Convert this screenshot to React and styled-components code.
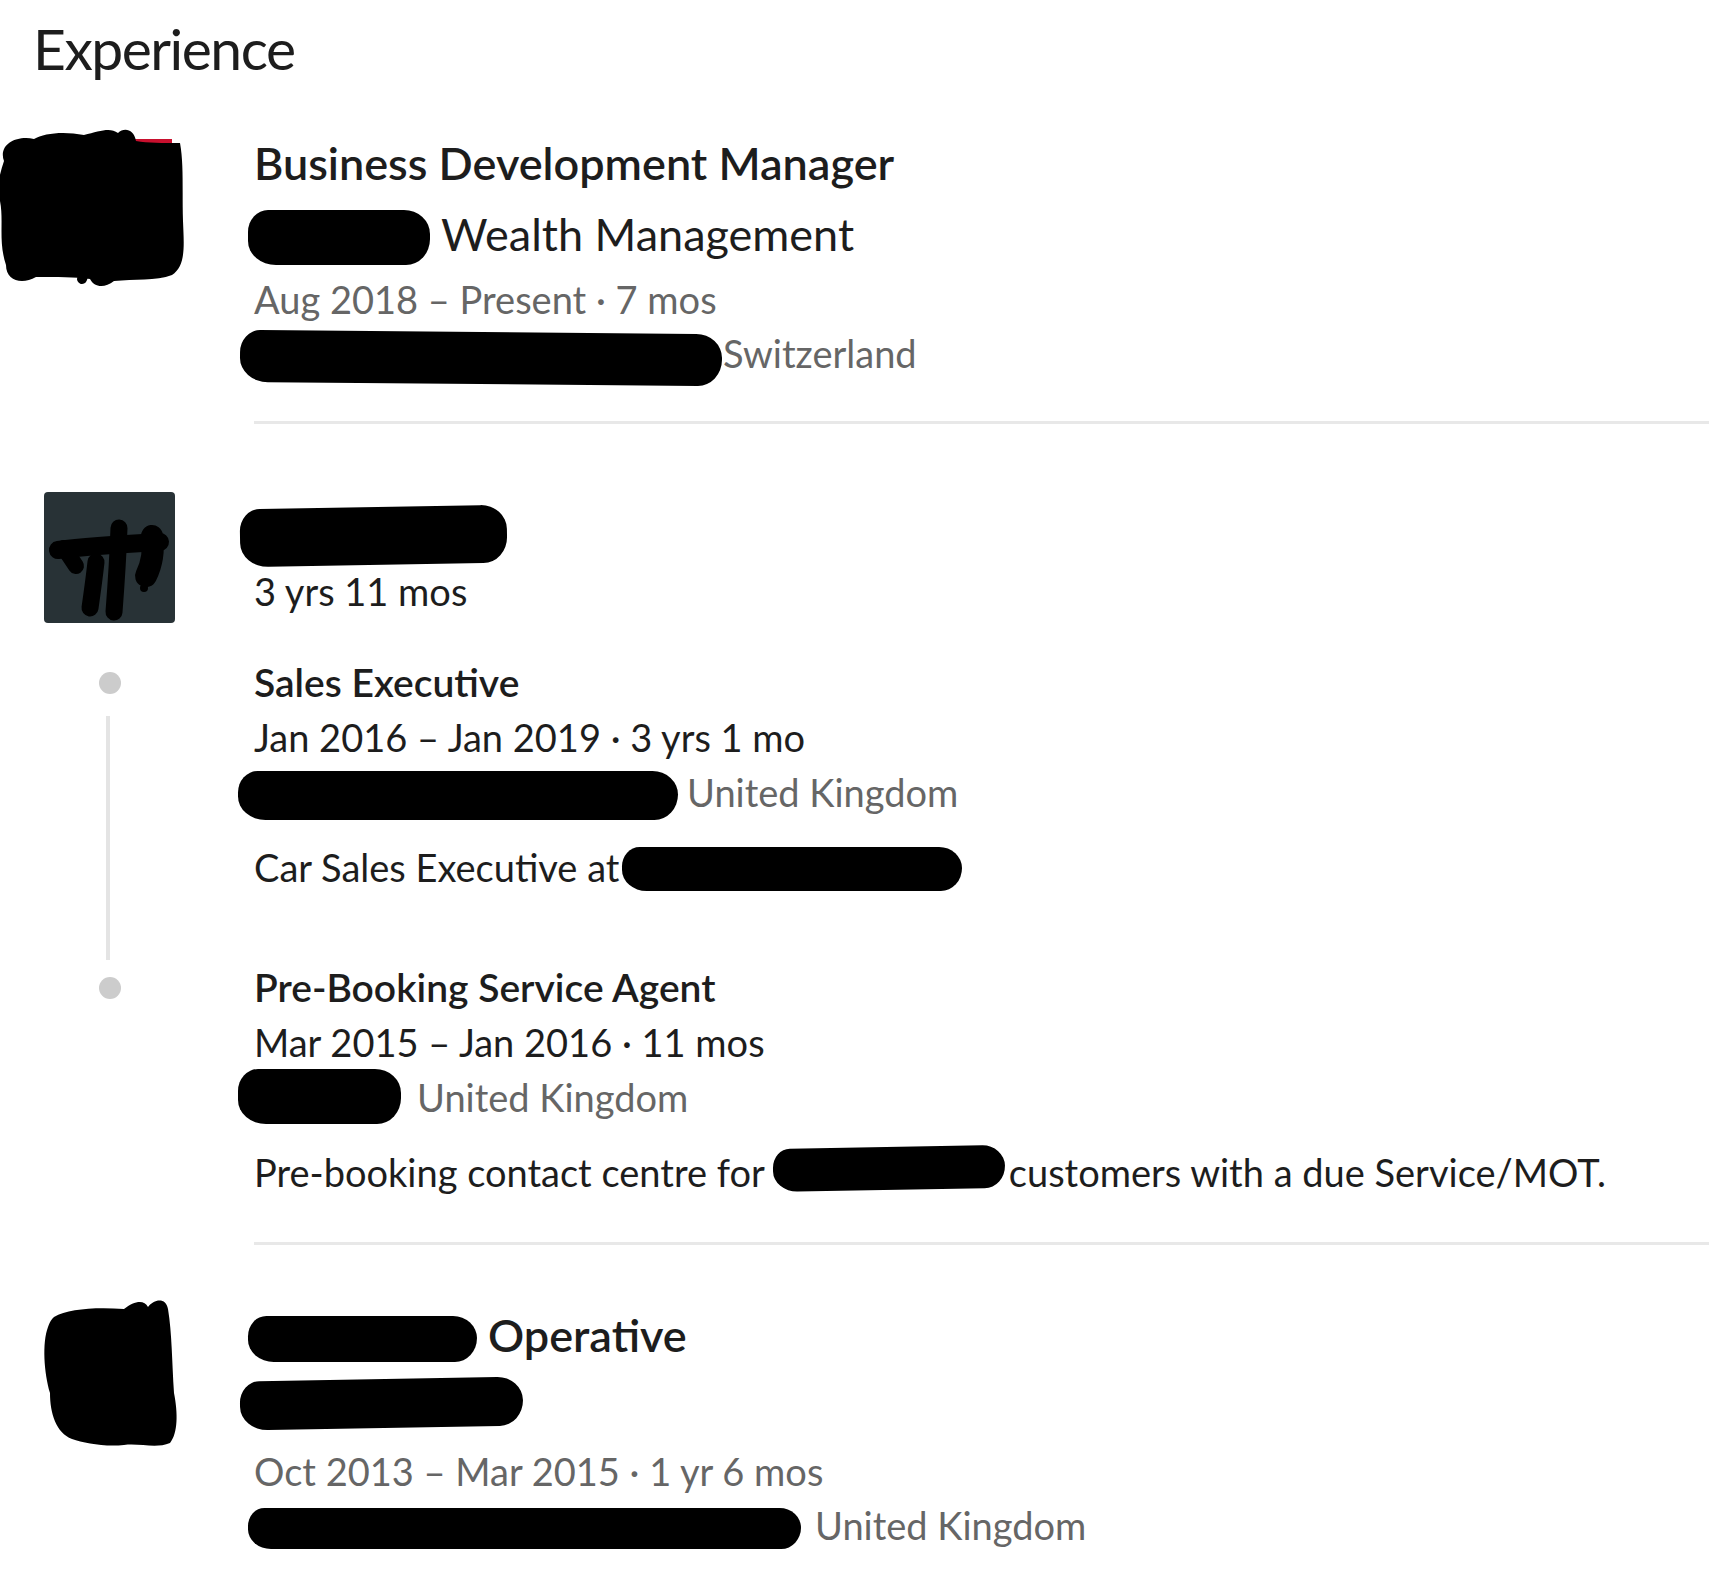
import React from "react";
import styled, { createGlobalStyle } from "styled-components";

const GlobalStyle = createGlobalStyle`
  html, body {
    margin: 0;
    padding: 0;
    background: #ffffff;
  }
  body {
    font-family: "Lato", "Open Sans", "Liberation Sans", sans-serif;
    color: #1d1d1d;
  }
`;

const Colors = {
  Text: "#1d1d1d",
  Gray: "#666666",
  Divider: "#e8e8e8",
  Dot: "#cccccc",
  Line: "#e4e4e4",
};

const Page = styled.div`
  width: 1709px;
  padding-top: 8px;
`;

const Heading = styled.h2`
  margin: 0 0 43px 33px;
  font-size: 57px;
  line-height: 80px;
  letter-spacing: -1.5px;
  font-weight: 400;
  color: ${Colors.Text};
`;

const Entry = styled.section`
  display: grid;
  grid-template-columns: 131px 1fr;
  column-gap: 79px;
  padding-left: 44px;
  padding-top: ${(p) => p.$top || 0}px;
`;

const Logo = styled.div`
  width: 131px;
  height: 131px;
  grid-column: 1;
  svg {
    display: block;
    overflow: visible;
  }
`;

const Body = styled.div`
  grid-column: 2;
  display: flex;
  flex-direction: column;
  padding-bottom: ${(p) => p.$bottom || 0}px;
`;

const Title = styled.div`
  font-size: ${(p) => (p.$small ? 39 : 45)}px;
  line-height: ${(p) => (p.$small ? 55 : 64)}px;
  font-weight: 600;
  color: ${Colors.Text};
  white-space: nowrap;
`;

const Company = styled.div`
  margin-top: 7px;
  font-size: 45px;
  line-height: 64px;
  font-weight: 400;
  color: ${Colors.Text};
  white-space: nowrap;
`;

const Meta = styled.div`
  margin-top: ${(p) => p.$mt || 0}px;
  font-size: 38px;
  line-height: ${(p) => p.$lh || 54}px;
  font-weight: 400;
  color: ${(p) => (p.$muted ? Colors.Gray : Colors.Text)};
  white-space: nowrap;
`;

const Redaction = styled.span`
  display: inline-block;
  width: ${(p) => p.$w}px;
  height: ${(p) => p.$h}px;
  margin: -24px ${(p) => p.$mr || 0}px -${(p) => p.$depth}px ${(p) => p.$ml || 0}px;
  vertical-align: baseline;
  background: #000;
  border-radius: 20px 26px 24px 28px / 22px 24px 26px 24px;
  transform: rotate(${(p) => p.$rot || 0}deg);
`;

const Divider = styled.div`
  grid-column: 2;
  height: 3px;
  background: ${Colors.Divider};
`;

const Timeline = styled.div`
  grid-column: 1;
  display: flex;
  flex-direction: column;
  align-items: center;
`;

const Dot = styled.span`
  width: 22px;
  height: 22px;
  margin-top: 17px;
  border-radius: 50%;
  background: ${Colors.Dot};
  flex: none;
`;

const Rail = styled.span`
  flex: 1;
  width: 4px;
  margin-top: 22px;
  margin-left: -4px;
  background: ${Colors.Line};
`;

function RedLogo() {
  return (
    <Logo>
      <svg width="131" height="131" viewBox="0 0 131 131">
        <rect x="20" y="8" width="108" height="130" fill="#c8102e" />
        <path
          d="M -40 30 C -46 14, -28 4, -10 8 C 0 2, 20 0, 40 4 C 56 0, 66 -4, 74 2 C 80 -4, 90 -2, 92 10 C 104 12, 118 12, 136 12 C 140 34, 138 60, 139 90 C 140 115, 142 135, 128 144 C 112 150, 90 148, 70 150 C 60 158, 50 156, 46 148 C 30 146, 14 146, -8 146 C -22 154, -38 150, -38 134 C -46 110, -40 90, -44 70 C -48 55, -44 42, -40 30 Z"
          fill="#000"
        />
        <path d="M 38 148 L 44 132" stroke="#000" strokeWidth="10" strokeLinecap="round" />
      </svg>
    </Logo>
  );
}

function DarkLogo() {
  return (
    <Logo>
      <svg width="131" height="131" viewBox="0 0 131 131">
        <rect width="131" height="131" rx="4" fill="#283236" />
        <g stroke="#000" strokeLinecap="round" fill="none">
          <path d="M 14 58 C 44 54, 80 52, 116 50" strokeWidth="18" />
          <path d="M 20 56 L 32 74" strokeWidth="16" />
          <path d="M 75 36 C 74 64, 72 94, 70 120" strokeWidth="17" />
          <path d="M 52 70 C 50 88, 48 102, 46 116" strokeWidth="17" />
          <path d="M 108 44 C 110 58, 108 72, 102 84" strokeWidth="22" />
        </g>
        <circle cx="100" cy="96" r="4" fill="#000" />
      </svg>
    </Logo>
  );
}

function BlobLogo() {
  return (
    <Logo>
      <svg width="131" height="131" viewBox="0 0 131 131">
        <path
          d="M 10 14 C 24 6, 50 4, 80 6 C 90 -2, 100 -4, 104 4 C 110 -4, 122 -6, 124 6 C 128 30, 128 60, 130 90 C 134 110, 134 130, 126 140 C 112 146, 96 140, 80 142 C 60 144, 40 140, 28 136 C 12 130, 6 110, 6 90 C 0 70, -2 40, 4 24 C 6 18, 8 16, 10 14 Z"
          fill="#000"
        />
      </svg>
    </Logo>
  );
}

export default function App() {
  return (
    <>
      <GlobalStyle />
      <Page>
        <Heading>Experience</Heading>

        <Entry>
          <RedLogo />
          <Body $bottom={41}>
            <Title>Business Development Manager</Title>
            <Company>
              <Redaction $w={182} $h={55} $depth={14} $ml={-6} $mr={11} />
              Wealth Management
            </Company>
            <Meta $muted $mt={6}>
              Aug 2018 – Present · 7 mos
            </Meta>
            <Meta $muted>
              <Redaction $w={482} $h={52} $depth={16} $ml={-14} $mr={1} $rot={0.5} />
              Switzerland
            </Meta>
          </Body>
          <Divider />
        </Entry>

        <Entry $top={68}>
          <DarkLogo />
          <Body $bottom={37}>
            <Title>
              <Redaction $w={267} $h={58} $depth={24} $ml={-14} $rot={-1} />
            </Title>
            <Meta $mt={8}>3 yrs 11 mos</Meta>
          </Body>

          <Timeline>
            <Dot />
            <Rail />
          </Timeline>
          <Body $bottom={65}>
            <Title $small>Sales Executive</Title>
            <Meta $lh={55}>Jan 2016 – Jan 2019 · 3 yrs 1 mo</Meta>
            <Meta $muted $lh={55}>
              <Redaction $w={440} $h={49} $depth={13} $ml={-16} $mr={9} />
              United Kingdom
            </Meta>
            <Meta $lh={55} $mt={20}>
              Car Sales Executive at
              <Redaction $w={340} $h={44} $depth={9} $ml={3} />
            </Meta>
          </Body>

          <Timeline>
            <Dot />
          </Timeline>
          <Body $bottom={42}>
            <Title $small>Pre-Booking Service Agent</Title>
            <Meta $lh={55}>Mar 2015 – Jan 2016 · 11 mos</Meta>
            <Meta $muted $lh={55}>
              <Redaction $w={163} $h={55} $depth={12} $ml={-16} $mr={16} />
              United Kingdom
            </Meta>
            <Meta $lh={55} $mt={20}>
              Pre-booking contact centre for
              <Redaction $w={232} $h={43} $depth={3} $ml={8} $mr={4} $rot={-1} />
              customers with a due Service/MOT.
            </Meta>
          </Body>
          <Divider />
        </Entry>

        <Entry $top={58}>
          <BlobLogo />
          <Body>
            <Title>
              <Redaction $w={229} $h={46} $depth={10} $ml={-6} $mr={11} />
              Operative
            </Title>
            <Company>
              <Redaction $w={283} $h={49} $depth={5} $ml={-14} $rot={-1} />
            </Company>
            <Meta $muted $mt={6}>
              Oct 2013 – Mar 2015 · 1 yr 6 mos
            </Meta>
            <Meta $muted>
              <Redaction $w={553} $h={41} $depth={9} $ml={-6} $mr={14} />
              United Kingdom
            </Meta>
          </Body>
        </Entry>
      </Page>
    </>
  );
}
